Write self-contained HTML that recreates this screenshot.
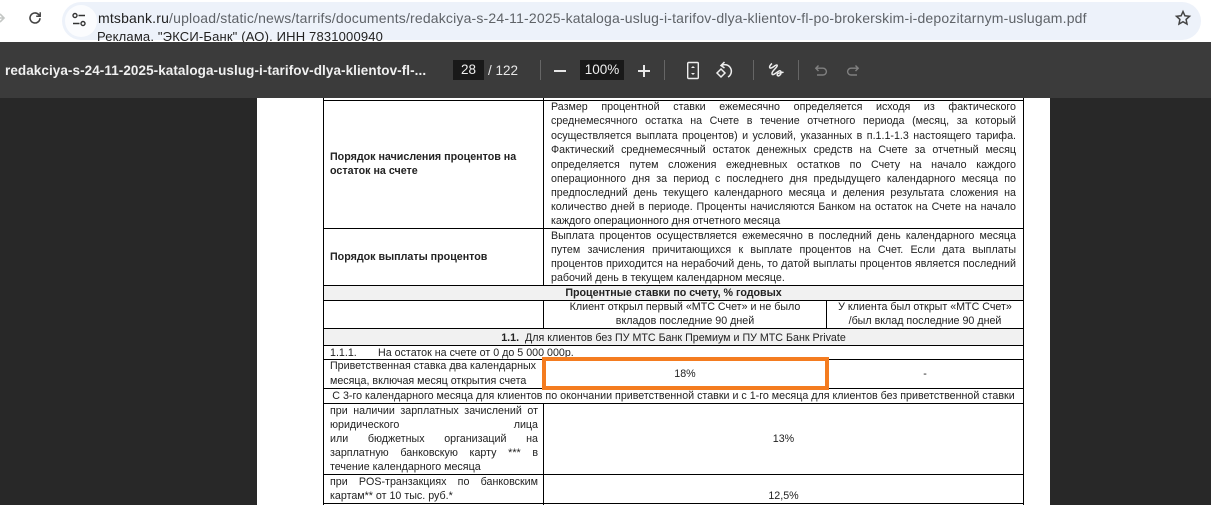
<!DOCTYPE html>
<html lang="ru"><head><meta charset="utf-8"><title>PDF</title>
<style>
html,body{margin:0;padding:0;width:1211px;height:505px;overflow:hidden;background:#282828}
#w{position:relative;width:1211px;height:505px;overflow:hidden;font-family:"Liberation Sans",sans-serif;filter:blur(.25px)}
#w div{position:absolute;white-space:nowrap}
.b{background:#000}
.l{font-size:10.7px;line-height:14px;height:14px;color:#222;white-space:normal!important;text-align:justify;text-align-last:justify;margin-top:-1px}
.n{font-size:10.7px;line-height:14px;height:14px;color:#222;margin-top:-1px}
.c{text-align:center}
.a{left:551px;width:465px}
.z{left:330px;width:208px}
svg{position:absolute;overflow:visible;fill:none}
</style></head><body><div id="w">
<!-- browser chrome -->
<div style="left:0;top:0;width:1211px;height:42px;background:#fff"></div>
<div style="left:62px;top:2px;width:1139px;height:38px;border-radius:19px;background:#edf2fa"></div>
<div style="left:65px;top:5px;width:32px;height:32px;border-radius:16px;background:#fff;opacity:.75"></div>
<svg style="left:-6px;top:11px" width="14" height="14" viewBox="0 0 14 14"><path d="M2 7h7M6 3l4 4-4 4" stroke="#c4c7c5" stroke-width="1.6"/></svg>
<svg style="left:27px;top:10px" width="16" height="16" viewBox="0 0 16 16"><path d="M13 8.2A5 5 0 1 1 11.6 4.5L13 6" stroke="#444" stroke-width="1.6"/><path d="M13.2 2.3V6.3H9.2" stroke="#444" stroke-width="1.5"/></svg>
<svg style="left:71px;top:12px" width="16" height="16" viewBox="0 0 16 16"><circle cx="4" cy="3.5" r="2" stroke="#333" stroke-width="1.4"/><path d="M7.5 3.5H14M2 11.5H8.5" stroke="#333" stroke-width="1.5"/><circle cx="12" cy="11.5" r="2" stroke="#333" stroke-width="1.4"/></svg>
<div style="left:98px;top:9px;font-size:14px;line-height:18px;color:#5f6368;letter-spacing:.178px"><span style="color:#1f1f1f">mtsbank.ru</span>/upload/static/news/tarrifs/documents/redakciya-s-24-11-2025-kataloga-uslug-i-tarifov-dlya-klientov-fl-po-brokerskim-i-depozitarnym-uslugam.pdf</div>
<svg style="left:1175px;top:10px" width="16" height="16" viewBox="0 0 16 16"><path d="M8 1.6l1.9 4.2 4.6.5-3.4 3.1.9 4.6L8 11.7 4 14l.9-4.6L1.5 6.3l4.6-.5z" stroke="#444" stroke-width="1.5"/></svg>
<div style="left:97px;top:29px;font-size:13px;line-height:15px;color:#222;letter-spacing:.17px">Реклама. "ЭКСИ-Банк" (АО). ИНН 7831000940</div>
<!-- pdf toolbar -->
<div style="left:0;top:42px;width:1211px;height:56px;background:#3b3b3b"></div>
<div style="left:5px;top:63px;font-size:13.5px;font-weight:bold;line-height:16px;color:#f0f0f0;letter-spacing:.07px">redakciya-s-24-11-2025-kataloga-uslug-i-tarifov-dlya-klientov-fl-...</div>
<div style="left:453px;top:60px;width:31px;height:20px;background:#191919;color:#eee;font-size:13.5px;line-height:20px;text-align:center">28</div>
<div style="left:488px;top:62px;font-size:13.5px;line-height:17px;color:#e8e8e8">/ 122</div>
<div style="left:540px;top:60px;width:1px;height:20px;background:#666"></div>
<div style="left:554px;top:70px;width:12px;height:2px;background:#e8e8e8"></div>
<div style="left:580px;top:60px;width:44px;height:20px;background:#191919;color:#eee;font-size:13.5px;line-height:20px;text-align:center">100%</div>
<div style="left:638px;top:70px;width:12px;height:2px;background:#e8e8e8"></div>
<div style="left:643px;top:65px;width:2px;height:12px;background:#e8e8e8"></div>
<div style="left:664px;top:60px;width:1px;height:20px;background:#666"></div>
<svg style="left:686px;top:61px" width="14" height="20" viewBox="0 0 14 20"><rect x="1.7" y="1.5" width="10.6" height="16" rx="1" stroke="#eee" stroke-width="1.4"/><path d="M5 7l2-2 2 2zM5 12l2 2 2-2z" fill="#eee"/></svg>
<svg style="left:715px;top:61px" width="20" height="20" viewBox="0 0 20 20"><path d="M6.5 4.5A6 6 0 1 1 13 16" stroke="#eee" stroke-width="1.5"/><path d="M9.5 1L6 4.5 9.5 7" stroke="#eee" stroke-width="1.5"/><path d="M6 8l4 4-4 4-4-4z" stroke="#eee" stroke-width="1.5"/></svg>
<div style="left:753px;top:60px;width:1px;height:20px;background:#666"></div>
<svg style="left:768px;top:62px" width="16" height="16" viewBox="0 0 16 16"><path d="M4 1.500C2 3 1 5 2 6C4 7 8 2 9 3C10.500 5 3 9 4 12C5 14 9 10 11 9C13 8 14 11 12 13C10 15 8 13 10 11.500C11.500 10.500 14 11 15.500 10" stroke="#eee" stroke-width="1.5"/></svg>
<div style="left:798px;top:60px;width:1px;height:20px;background:#666"></div>
<svg style="left:814px;top:64px" width="14" height="14" viewBox="0 0 14 14"><path d="M4.500 1.500L1.800 4.200 4.500 7M2 4.200H9A3.400 3.400 0 0 1 9 11H3" stroke="#808080" stroke-width="1.4"/></svg>
<svg style="left:846px;top:64px" width="14" height="14" viewBox="0 0 14 14"><path d="M9.500 1.500L12.200 4.200 9.500 7M12 4.200H5A3.400 3.400 0 0 0 5 11H11" stroke="#808080" stroke-width="1.4"/></svg>
<!-- page -->
<div style="left:257px;top:98px;width:793px;height:407px;background:#fff"></div>
<div style="left:323px;top:285px;width:701px;height:15px;background:#f1f1f1"></div>
<div style="left:323px;top:329px;width:701px;height:16px;background:#f1f1f1"></div>
<!-- horizontal rules -->
<div class="b" style="left:323px;top:100px;width:701px;height:1px"></div>
<div class="b" style="left:323px;top:228px;width:701px;height:1px"></div>
<div class="b" style="left:323px;top:285px;width:701px;height:1px"></div>
<div class="b" style="left:323px;top:300px;width:701px;height:1px"></div>
<div class="b" style="left:323px;top:328px;width:701px;height:1px"></div>
<div class="b" style="left:323px;top:345px;width:701px;height:1px"></div>
<div class="b" style="left:323px;top:359px;width:701px;height:1px"></div>
<div class="b" style="left:323px;top:388px;width:701px;height:1px"></div>
<div class="b" style="left:323px;top:403px;width:701px;height:1px"></div>
<div class="b" style="left:323px;top:474px;width:701px;height:1px"></div>
<div class="b" style="left:323px;top:503px;width:701px;height:1px"></div>
<!-- vertical rules -->
<div class="b" style="left:323px;top:98px;width:1px;height:407px"></div>
<div class="b" style="left:1023px;top:98px;width:1px;height:407px"></div>
<div class="b" style="left:543px;top:98px;width:1px;height:187px"></div>
<div class="b" style="left:543px;top:300px;width:1px;height:29px"></div>
<div class="b" style="left:826px;top:300px;width:1px;height:29px"></div>
<div class="b" style="left:543px;top:359px;width:1px;height:29px"></div>
<div class="b" style="left:543px;top:403px;width:1px;height:102px"></div>
<!-- row 1 -->
<div class="n" style="left:330px;top:151px;font-weight:bold">Порядок начисления процентов на</div>
<div class="n" style="left:330px;top:165px;font-weight:bold">остаток на счете</div>
<div class="l a" style="top:101px">Размер процентной ставки ежемесячно определяется исходя из фактического</div>
<div class="l a" style="top:115px">среднемесячного остатка на Счете в течение отчетного периода (месяц, за который</div>
<div class="l a" style="top:130px">осуществляется выплата процентов) и условий, указанных в п.1.1-1.3 настоящего тарифа.</div>
<div class="l a" style="top:144px">Фактический среднемесячный остаток денежных средств на Счете за отчетный месяц</div>
<div class="l a" style="top:159px">определяется путем сложения ежедневных остатков по Счету на начало каждого</div>
<div class="l a" style="top:173px">операционного дня за период с последнего дня предыдущего календарного месяца по</div>
<div class="l a" style="top:187px">предпоследний день текущего календарного месяца и деления результата сложения на</div>
<div class="l a" style="top:201px">количество дней в периоде. Проценты начисляются Банком на остаток на Счете на начало</div>
<div class="n" style="left:551px;top:215px">каждого операционного дня отчетного месяца</div>
<!-- row 2 -->
<div class="n" style="left:330px;top:251px;font-weight:bold">Порядок выплаты процентов</div>
<div class="l a" style="top:230px">Выплата процентов осуществляется ежемесячно в последний день календарного месяца</div>
<div class="l a" style="top:244px">путем зачисления причитающихся к выплате процентов на Счет. Если дата выплаты</div>
<div class="l a" style="top:258px">процентов приходится на нерабочий день, то датой выплаты процентов является последний</div>
<div class="n" style="left:551px;top:272px">рабочий день в текущем календарном месяце.</div>
<!-- headers -->
<div class="n c" style="left:324px;width:699px;top:287px;font-weight:bold">Процентные ставки по счету, % годовых</div>
<div class="n c" style="left:544px;width:282px;top:301px">Клиент открыл первый «МТС Счет» и не было</div>
<div class="n c" style="left:544px;width:282px;top:315px">вкладов последние 90 дней</div>
<div class="n c" style="left:827px;width:196px;top:301px">У клиента был открыт «МТС Счет»</div>
<div class="n c" style="left:827px;width:196px;top:315px">/был вклад последние 90 дней</div>
<div class="n c" style="left:324px;width:699px;top:332px"><b>1.1.</b>&nbsp; Для клиентов без ПУ МТС Банк Премиум и ПУ МТС Банк Private</div>
<div class="n" style="left:330px;top:347px">1.1.1.</div>
<div class="n" style="left:378px;top:347px">На остаток на счете от 0 до 5 000 000р.</div>
<div class="n" style="left:330px;top:360px">Приветственная ставка два календарных</div>
<div class="n" style="left:330px;top:375px">месяца, включая месяц открытия счета</div>
<div class="n c" style="left:544px;width:282px;top:368px">18%</div>
<div class="n c" style="left:827px;width:196px;top:368px">-</div>
<div style="left:542px;top:357px;width:279px;height:25px;border:4px solid #f47c20"></div>
<div class="n c" style="left:324px;width:699px;top:390px">С 3-го календарного месяца для клиентов по окончании приветственной ставки и с 1-го месяца для клиентов без приветственной ставки</div>
<div class="l z" style="top:405px">при наличии зарплатных зачислений от</div>
<div class="l z" style="top:419px">юридического лица</div>
<div class="l z" style="top:433px">или бюджетных организаций на</div>
<div class="l z" style="top:447px">зарплатную банковскую карту *** в</div>
<div class="n" style="left:330px;top:461px">течение календарного месяца</div>
<div class="n c" style="left:544px;width:479px;top:433px">13%</div>
<div class="l z" style="top:476px">при POS-транзакциях по банковским</div>
<div class="n" style="left:330px;top:490px">картам** от 10 тыс. руб.*</div>
<div class="n c" style="left:544px;width:479px;top:490px">12,5%</div>
</div></body></html>
